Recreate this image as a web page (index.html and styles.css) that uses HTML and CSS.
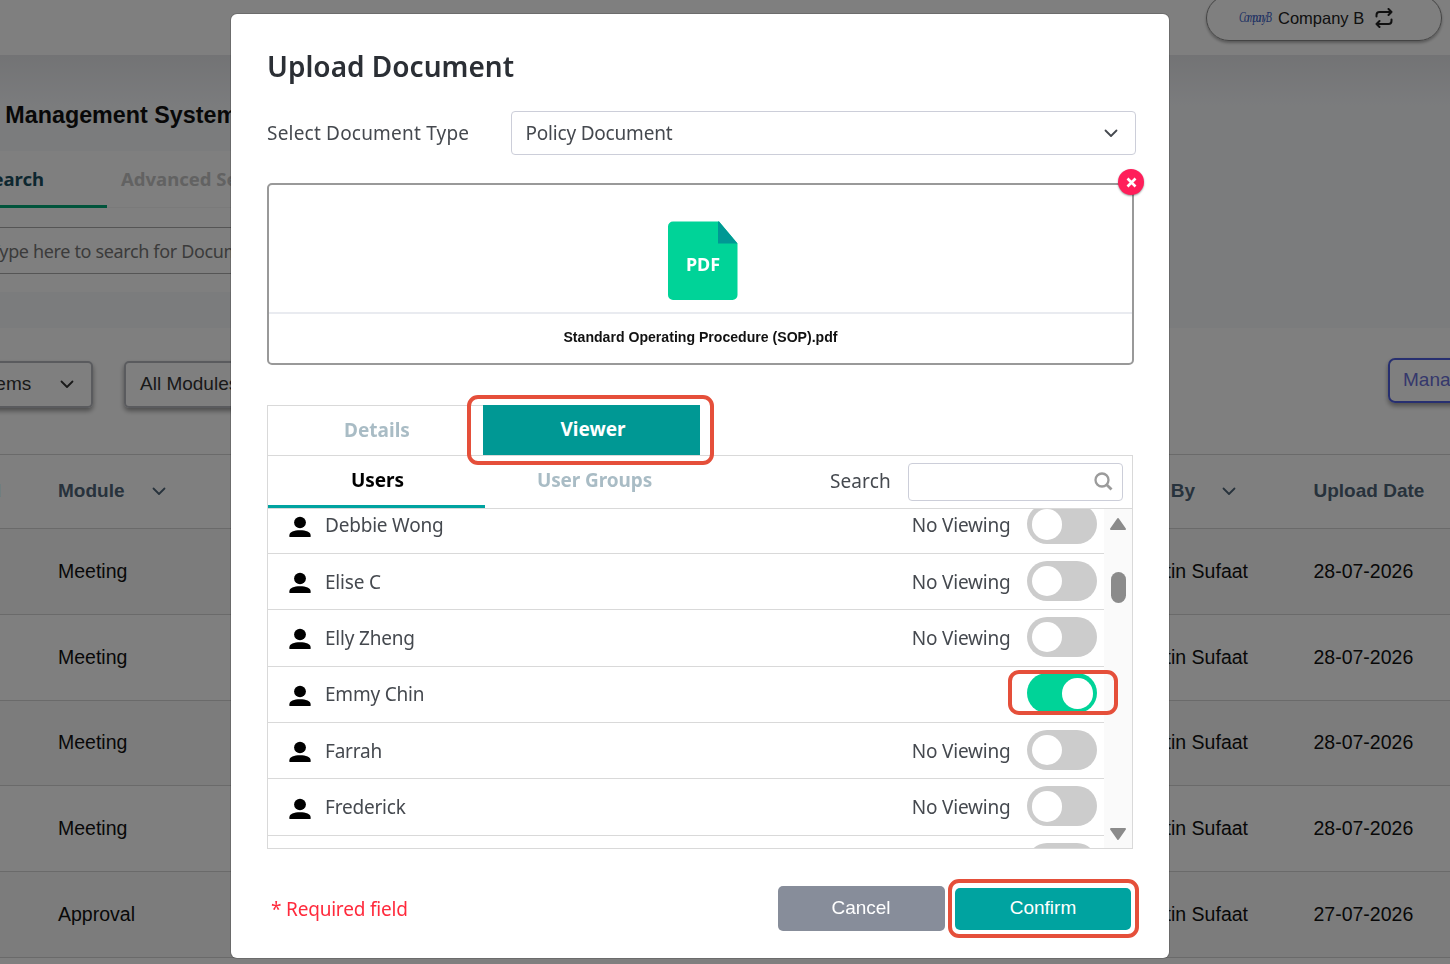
FILE: index.html
```html
<!DOCTYPE html>
<html lang="en">
<head>
<meta charset="UTF-8">
<title>Document Management System</title>
<link rel="stylesheet" href="styles.css">
</head>
<body>
<svg width="0" height="0" class="defs">
<symbol id="chevron" viewBox="0 0 16 16"><path d="M2.500 5.500l5.500 5.500 5.500-5.500" fill="none" stroke="currentColor" stroke-width="1.800" stroke-linecap="round" stroke-linejoin="round"/></symbol>
<symbol id="person" viewBox="0 0 22 22"><ellipse cx="11" cy="6.500" rx="5.900" ry="5.800"/><path d="M.4 21v-1.800C.4 16 5 14.200 11 14.200s10.600 1.800 10.600 5V21z"/></symbol>
</svg>

<div class="page">
<div class="topbar">
<div class="company">
<span class="company-logo">Company B</span>
<span>Company B</span>
<svg class="switch" viewBox="0 0 18 20"><path d="M1.500 8.500V7a3 3 0 0 1 3-3h12M13.500 1l3 3-3 3M16.500 11.500V13a3 3 0 0 1-3 3h-12M4.500 13l-3 3 3 3" fill="none" stroke="#222" stroke-width="2" stroke-linecap="round" stroke-linejoin="round"/></svg>
</div>
</div>
<div class="hero">
<h1>Document Management System</h1>
<div class="search-card">
<div class="search-tabs"><span class="on">Basic Search</span><span>Advanced Search</span></div>
<div class="search-box">Type here to search for Documents</div>
</div>
</div>
<div class="filters">
<div class="filter">All Systems <svg class="chev"><use href="#chevron"/></svg></div>
<div class="filter">All Modules</div>
<div class="manage">Manage</div>
</div>
<div class="table">
<div class="tr th"><span class="system">Uploaded</span><span>Module <svg class="chev"><use href="#chevron"/></svg></span><span>Uploaded By <svg class="chev"><use href="#chevron"/></svg></span><span>Upload Date</span></div>
<div class="tr odd"><span></span><span>Meeting</span><span class="name">Fatin Sufaat</span><span>28-07-2026</span></div>
<div class="tr"><span></span><span>Meeting</span><span class="name">Fatin Sufaat</span><span>28-07-2026</span></div>
<div class="tr odd"><span></span><span>Meeting</span><span class="name">Fatin Sufaat</span><span>28-07-2026</span></div>
<div class="tr"><span></span><span>Meeting</span><span class="name">Fatin Sufaat</span><span>28-07-2026</span></div>
<div class="tr odd"><span></span><span>Approval</span><span class="name">Fatin Sufaat</span><span>27-07-2026</span></div>
<div class="tr"></div>
</div>
</div>

<div class="backdrop">
<div class="modal">
<h2>Upload Document</h2>
<div class="type-row">
<label>Select Document Type</label>
<div class="select">Policy Document <svg class="chev"><use href="#chevron"/></svg></div>
</div>

<div class="upload">
<div class="preview">
<svg width="70" height="80" viewBox="0 0 70 80"><path d="M5 .5h46l18.500 22V74a5 5 0 0 1-5 5H5a5 5 0 0 1-5-5V5.500a5 5 0 0 1 5-5z" fill="#00d398"/><path d="M50 .5h1l18.500 22H50z" fill="#009894"/><text x="35" y="49.500" text-anchor="middle" class="pdf">PDF</text></svg>
</div>
<div class="filename">Standard Operating Procedure (SOP).pdf</div>
<div class="remove"><svg width="11" height="11" viewBox="0 0 11 11"><path d="M1.500 1.500l8 8M9.500 1.500l-8 8" stroke="#fff" stroke-width="2.600"/></svg></div>
</div>

<div class="tabs">
<div class="tab">Details</div>
<div class="tab active">Viewer<div class="mark mark-tab"></div></div>
</div>
<div class="panel">
<div class="subtabs">
<div class="subtab active">Users</div>
<div class="subtab">User Groups</div>
<label>Search</label>
<div class="search"><svg width="20" height="20" viewBox="0 0 20 20"><circle cx="9" cy="8" r="6.500" fill="none" stroke="#9b9b9b" stroke-width="2.300"/><path d="M13.700 12.700l4.800 4.800" stroke="#9b9b9b" stroke-width="2.800"/></svg></div>
</div>
<div class="list">
<div class="users">
<div class="user"><svg class="person"><use href="#person"/></svg><span class="who">Debbie Wong</span><span>No Viewing</span><i class="toggle"></i></div>
<div class="user"><svg class="person"><use href="#person"/></svg><span class="who">Elise C</span><span>No Viewing</span><i class="toggle"></i></div>
<div class="user"><svg class="person"><use href="#person"/></svg><span class="who">Elly Zheng</span><span>No Viewing</span><i class="toggle"></i></div>
<div class="user"><svg class="person"><use href="#person"/></svg><span class="who">Emmy Chin</span><i class="toggle on"><b class="mark mark-toggle"></b></i></div>
<div class="user"><svg class="person"><use href="#person"/></svg><span class="who">Farrah</span><span>No Viewing</span><i class="toggle"></i></div>
<div class="user"><svg class="person"><use href="#person"/></svg><span class="who">Frederick</span><span>No Viewing</span><i class="toggle"></i></div>
<div class="user"><span class="who"></span><i class="toggle"></i></div>
</div>
<div class="scrollbar">
<svg width="18" height="14" viewBox="0 0 18 14"><path d="M9 2L16 12H2z" fill="#8b8b8b" stroke="#8b8b8b" stroke-width="2" stroke-linejoin="round"/></svg>
<div class="thumb"></div>
<svg width="18" height="14" viewBox="0 0 18 14"><path d="M9 12L2 2h14z" fill="#8b8b8b" stroke="#8b8b8b" stroke-width="2" stroke-linejoin="round"/></svg>
</div>
</div>
</div>

<div class="footer">
<span class="required">* Required field</span>
<div class="btn cancel">Cancel</div>
<div class="btn confirm">Confirm<div class="mark mark-btn"></div></div>
</div>
</div>
</div>
</body>
</html>
```
FILE: styles.css
```css
* {box-sizing:border-box;}
html {overflow:hidden;}
body {margin:0; height:964px; overflow:hidden; background:#fff; font-family:"Liberation Sans", Arial, sans-serif; color:#111;}
.defs {display:block; position:absolute;}
.chev {width:16px; height:16px; flex:none;}

/* page behind the dialog */
.page {margin-left:-120px; width:1570px; height:964px; overflow:hidden;}
.topbar {display:flex; height:55px; padding-left:1326px;}
.company {display:flex; align-items:center; width:236px; height:46px; margin-top:-5px; padding-left:32px; border:1px solid #888; border-radius:23px; font-size:16.500px; color:#222; box-shadow:0 2px 3px rgba(0,0,0,.3); white-space:nowrap;}
.company-logo {width:32px; margin-right:7px; font:italic 14px "Liberation Serif", serif; letter-spacing:-2.500px; color:#3f63c8; transform:scaleX(.72); transform-origin:left;}
.switch {width:18px; height:20px; margin-left:11px;}
.hero {height:273px; padding-top:1px; background:linear-gradient(#e6e7ea, #f6f8fb 50px);}
.hero h1 {margin:46px 0 0 5px; font-size:23.300px; line-height:27px; white-space:nowrap;}
.search-card {width:900px; height:141px; margin-top:22px; background:#fff;}
.search-tabs {display:flex; height:57px; border-bottom:1px solid #f4f4f4; font:bold 18.500px/56px "Noto Sans", sans-serif; color:#c4c4c4;}
.search-tabs span {width:300px; padding-left:14px;}
.search-tabs .on {width:227px; height:57px; padding:0 63px 0 0; text-align:right; color:#1a4f60; border-bottom:3px solid #00a876;}
.search-box {height:47px; margin:19px 0 0 20px; padding-left:89px; border:1px solid #aaa; font:18px/46px "Noto Sans", sans-serif; letter-spacing:-.35px; color:#777;}
.filters {display:flex; height:126px; padding-top:33px; font-size:19px; color:#333;}
.filter {display:flex; flex:none; align-items:center; justify-content:space-between; width:190px; height:47px; margin:0 31px 0 0; padding:0 16px 2px 14px; border:2px solid #b4b6bd; border-radius:5px; box-shadow:0 3px 5px rgba(0,0,0,.4);}
.filter:first-child {width:192px; margin-left:21px; padding-left:29px;}
.manage {flex:none; width:180px; height:45px; margin:-3.500px 0 0 1043px; padding-left:13px; border:2.500px solid #4f5fe0; border-radius:7px; line-height:40px; color:#6a70d8; box-shadow:0 3px 5px rgba(0,0,0,.4);}
.tr {display:grid; grid-template-columns:178px 1021px 234.500px 200px; align-items:center; height:85.800px; border-bottom:1px solid #d5d5d5; font-size:19.500px;}
.tr.odd {background:#f9f9f9;}
.th {height:75px; padding-bottom:2px; border-top:1px solid #d5d5d5; font-size:19px; font-weight:bold; color:#4f6578;}
.th span {display:flex; align-items:center;}
.th .chev {margin-left:26px;}
.th .system {justify-content:flex-end; padding-right:57px; color:#5fa8c8;}
.name {width:169px; text-align:right;}

/* dialog */
.backdrop {position:fixed; inset:0; padding:14px 0 0 231px; background:rgba(0,0,0,.5);}
.modal {width:938px; height:944px; padding:35px 32px 0 36px; background:#fff; border-radius:6px; box-shadow:0 0 0 1px rgba(0,0,0,.15); font:19px/26px "Noto Sans", sans-serif; letter-spacing:-.2px; color:#45494f;}
.modal h2 {margin:0; font-size:28px; font-weight:600; letter-spacing:0; line-height:34px; color:#2b2f35;}
.type-row {display:flex; align-items:center; height:45px; margin-top:27.500px;}
.type-row label {width:243.500px; letter-spacing:.2px;}
.select {display:flex; align-items:center; justify-content:space-between; width:625px; height:44px; padding:0 16px 0 14px; border:1px solid #ccced9; border-radius:4px;}
.upload {position:relative; width:867px; height:182px; margin-top:27.500px; border:2px solid #999; border-radius:5px;}
.preview {height:129px; padding:35.500px 0 0 399px; border-bottom:2px solid #e9ebf0;}
.preview svg {display:block;}
.pdf {font:bold 18px "Noto Sans", sans-serif; letter-spacing:0; fill:#fff;}
.filename {font:bold 14.100px/47px "Liberation Sans", Arial, sans-serif; letter-spacing:0; color:#111; text-align:center;}
.remove {position:absolute; top:-16px; right:-12px; display:flex; align-items:center; justify-content:center; width:26px; height:26px; border-radius:50%; background:#ff1e5a; box-shadow:0 1px 2px rgba(0,0,0,.4);}
.tabs {display:flex; height:50px; margin-top:40px; font-weight:bold; text-align:center; line-height:50px; letter-spacing:0;}
.tab {position:relative; width:216px; border:1px solid #d9d9d9; border-width:1px 0 0 1px; color:#a9bcc5; padding-left:3px; line-height:48px;}
.tab.active {width:217px; height:50px; border:0; background:#009894; color:#fff; line-height:49px;}
.panel {width:866px; height:394px; border:1px solid #d9d9d9;}
.subtabs {display:flex; height:53px; border-bottom:1px solid #d9d9d9;}
.subtab {width:217px; padding-left:2px; font-weight:bold; line-height:48px; text-align:center; letter-spacing:-.1px; color:#a9bcc5;}
.subtab.active {border-bottom:3px solid #00a3a0; color:#000;}
.subtabs label {margin-left:128px; width:78px; line-height:50px; letter-spacing:.1px;}
.search {display:flex; align-items:center; justify-content:flex-end; width:215px; height:38px; margin-top:7px; padding-right:9px; border:1px solid #ccced9; border-radius:4px;}
.list {display:flex; height:339px; overflow:hidden;}
.users {width:836px; margin-top:-11.500px;}
.user {display:flex; align-items:center; height:56.400px; padding:0 7px 0 21px; border-bottom:1px solid #d9d9d9;}
.person {width:22px; height:22px; margin:3px 14px 0 0; fill:#000;}
.who {flex:1;}
.toggle {position:relative; width:70px; height:40px; margin:-2px 0 0 16.500px; padding:5px 4.500px; border-radius:20px; background:#ccc;}
.toggle::before {content:""; display:block; width:30.500px; height:30.500px; border-radius:50%; background:#fff;}
.toggle.on {background:#00d398;}
.toggle.on::before {margin-left:30.500px;}
.scrollbar {display:flex; flex-direction:column; align-items:center; width:28px; padding:8px 0 7px; background:#fafafa;}
.thumb {width:15px; height:31px; margin:41px 0 auto; border-radius:8px; background:#8b8b8b;}
.footer {display:flex; align-items:flex-start; margin-top:37px; padding-left:4px;}
.required {width:506.500px; line-height:46px; color:#ff2a3c;}
.btn {width:167px; height:45px; border-radius:5px; background:#878d9a; color:#fff; font:19px/43px "Liberation Sans", Arial, sans-serif; letter-spacing:0; text-align:center;}
.confirm {position:relative; width:176px; height:42px; margin:2px 0 0 10.500px; background:#00a3a0; line-height:40px;}

/* red highlight frames */
.mark {position:absolute; border:4px solid #e54f3a; border-radius:11px;}
.mark-tab {left:-16px; top:-10px; width:247px; height:70px;}
.mark-toggle {left:-19px; top:-3px; width:110px; height:45px;}
.mark-btn {left:-7px; top:-9px; width:191px; height:59px;}
```
